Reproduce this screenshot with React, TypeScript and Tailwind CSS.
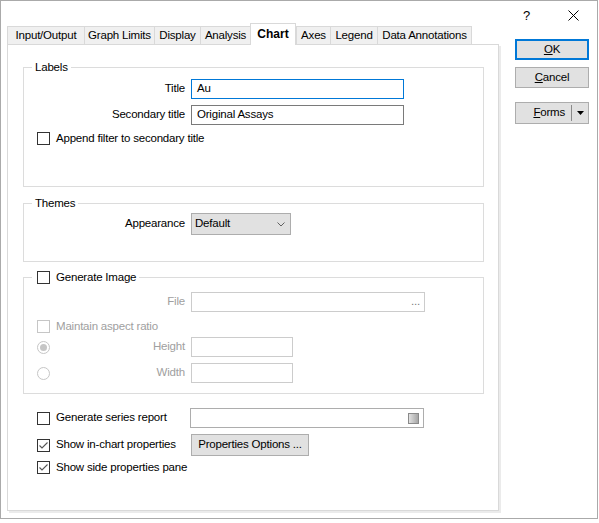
import React from 'react';

type BoxProps = { checked?: boolean; disabled?: boolean };

function CheckBox({ checked = false, disabled = false }: BoxProps) {
    return (
        <span
            className={`relative inline-block w-[13px] h-[13px] shrink-0 border bg-white ${disabled ? 'border-[#c6c6c6]' : 'border-[#333333]'}`}
        >
            {checked && (
                <svg width="11" height="11" viewBox="0 0 11 11" className="absolute left-0 top-0">
                    <polyline points="1.5,5.5 4,8 9.5,2.5" fill="none" stroke="#555555" strokeWidth="1.1" />
                </svg>
            )}
        </span>
    );
}

function Radio({ selected = false }: { selected?: boolean }) {
    return (
        <span className="flex items-center justify-center w-[13px] h-[13px] shrink-0 rounded-full border border-[#c6c6c6] bg-white">
            {selected && <span className="w-[7px] h-[7px] rounded-full bg-[#c6c6c6]" />}
        </span>
    );
}

const tabs = [
    { label: 'Input/Output', w: 'w-[77px]' },
    { label: 'Graph Limits', w: 'w-[70px]' },
    { label: 'Display', w: 'w-[46px]' },
    { label: 'Analysis', w: 'w-[50px]' },
    { label: 'Chart', w: 'w-[46px]', active: true },
    { label: 'Axes', w: 'w-[34px]' },
    { label: 'Legend', w: 'w-[47px]' },
    { label: 'Data Annotations', w: 'w-[95px]', last: true },
];

function Group({ title, height, children }: { title: React.ReactNode; height: string; children: React.ReactNode }) {
    return (
        <div className={`relative border border-[#dcdcdc] ${height}`}>
            <div className="absolute left-[8px] -top-[8px] bg-white px-[3px] h-[15px] flex items-center leading-none">
                {title}
            </div>
            {children}
        </div>
    );
}

export default function App() {
    return (
        <div className="w-[599px] h-[523px] bg-white text-[11.5px] tracking-[-0.2px] whitespace-nowrap text-black font-['Segoe_UI','Liberation_Sans',Arial,sans-serif]">
            <div className="w-[598px] h-[519px] border border-[#aaaaaa] flex flex-col">
                {/* title bar */}
                <div className="h-[22px] flex items-center justify-end pt-[6px] pr-[18px] gap-[38px]">
                    <span className="text-[13px] leading-none">?</span>
                    <svg width="11" height="11" viewBox="0 0 11 11">
                        <path d="M0.5 0.5 L10.5 10.5 M10.5 0.5 L0.5 10.5" stroke="#000" strokeWidth="1" />
                    </svg>
                </div>

                <div className="flex">
                    {/* tab control */}
                    <div className="ml-[6px] w-[492px] flex flex-col">
                        <div className="h-[21px] flex items-end">
                            {tabs.map((t) =>
                                t.active ? (
                                    <div
                                        key={t.label}
                                        className={`${t.w} h-[22px] -mb-px relative z-10 bg-white border-l border-t border-r border-[#d9d9d9] flex items-center justify-center font-bold text-[12px] tracking-[0px] pb-[2px]`}
                                    >
                                        {t.label}
                                    </div>
                                ) : (
                                    <div
                                        key={t.label}
                                        className={`${t.w} h-[18px] bg-[#f0f0f0] border-l border-t border-[#d9d9d9] ${t.last ? 'border-r' : ''} flex items-center justify-center`}
                                    >
                                        {t.label}
                                    </div>
                                )
                            )}
                        </div>
                        <div className="h-[467px] border border-[#d9d9d9] bg-white shadow-[2px_2px_0_0_#ebebeb] pl-[15px] pr-[14px] pt-[22px]">
                            <Group title="Labels" height="h-[120px]">
                                <div className="pt-[11px]">
                                    <div className="flex items-center h-[20px]">
                                        <span className="w-[161px] text-right">Title</span>
                                        <div className="ml-[6px] w-[213px] h-[20px] border border-[#0078d7] pl-[5px] flex items-center">Au</div>
                                    </div>
                                    <div className="flex items-center h-[20px] mt-[6px]">
                                        <span className="w-[161px] text-right">Secondary title</span>
                                        <div className="ml-[6px] w-[213px] h-[20px] border border-[#7a7a7a] pl-[5px] flex items-center">Original Assays</div>
                                    </div>
                                    <div className="flex items-center h-[13px] mt-[7px] pl-[13px] gap-[6px]">
                                        <CheckBox />
                                        <span>Append filter to secondary title</span>
                                    </div>
                                </div>
                            </Group>

                            <div className="mt-[16px]">
                                <Group title="Themes" height="h-[59px]">
                                    <div className="pt-[9px] flex items-center">
                                        <span className="w-[161px] text-right">Appearance</span>
                                        <div className="ml-[6px] w-[100px] h-[22px] bg-[#e1e1e1] border border-[#adadad] flex items-center justify-between pl-[3px] pr-[5px]">
                                            <span>Default</span>
                                            <svg width="8" height="5" viewBox="0 0 8 5">
                                                <polyline points="0.5,0.5 4,4 7.5,0.5" fill="none" stroke="#606060" strokeWidth="1" />
                                            </svg>
                                        </div>
                                    </div>
                                </Group>
                            </div>

                            <div className="mt-[15px]">
                                <Group
                                    title={
                                        <span className="flex items-center gap-[6px] pl-[2px]">
                                            <CheckBox />
                                            <span>Generate Image</span>
                                        </span>
                                    }
                                    height="h-[117px]"
                                >
                                    <div className="pt-[14px] text-[#a0a0a0]">
                                        <div className="flex items-center h-[20px]">
                                            <span className="w-[161px] text-right">File</span>
                                            <div className="ml-[6px] w-[234px] h-[20px] border border-[#cccccc] flex items-center justify-end pr-[4px] text-[#7a7a7a] leading-none">
                                                ...
                                            </div>
                                        </div>
                                        <div className="flex items-center h-[13px] mt-[8px] pl-[13px] gap-[6px]">
                                            <CheckBox disabled />
                                            <span>Maintain aspect ratio</span>
                                        </div>
                                        <div className="flex items-center h-[20px] mt-[4px]">
                                            <div className="w-[161px] flex items-center pl-[13px]">
                                                <Radio selected />
                                                <span className="flex-1 text-right">Height</span>
                                            </div>
                                            <div className="ml-[6px] w-[102px] h-[20px] border border-[#cccccc]" />
                                        </div>
                                        <div className="flex items-center h-[20px] mt-[6px]">
                                            <div className="w-[161px] flex items-center pl-[13px]">
                                                <Radio />
                                                <span className="flex-1 text-right">Width</span>
                                            </div>
                                            <div className="ml-[6px] w-[102px] h-[20px] border border-[#cccccc]" />
                                        </div>
                                    </div>
                                </Group>
                            </div>

                            <div className="mt-[14px] flex items-center h-[20px]">
                                <div className="w-[161px] flex items-center pl-[14px] gap-[6px]">
                                    <CheckBox />
                                    <span>Generate series report</span>
                                </div>
                                <div className="ml-[6px] w-[234px] h-[20px] border border-[#adadad] flex items-center justify-end pr-[4px]">
                                    <span className="w-[11px] h-[11px] border border-[#8a8a8a] bg-linear-to-r from-[#e2e2e2] to-[#a6a6a6]" />
                                </div>
                            </div>
                            <div className="mt-[6px] flex items-center h-[22px]">
                                <div className="w-[161px] flex items-center pl-[14px] gap-[6px]">
                                    <CheckBox checked />
                                    <span>Show in-chart properties</span>
                                </div>
                                <div className="ml-[7px] w-[118px] h-[22px] bg-[#e1e1e1] border border-[#adadad] flex items-center justify-center">
                                    Properties Options ...
                                </div>
                            </div>
                            <div className="mt-[5px] flex items-center h-[13px] pl-[14px] gap-[6px]">
                                <CheckBox checked />
                                <span>Show side properties pane</span>
                            </div>
                        </div>
                    </div>

                    {/* dialog buttons */}
                    <div className="ml-[16px] mt-[16px] flex flex-col w-[74px]">
                        <div className="h-[21px] bg-[#e1e1e1] border-2 border-[#0078d7] flex items-center justify-center">
                            <span><span className="underline">O</span>K</span>
                        </div>
                        <div className="mt-[7px] h-[21px] bg-[#e1e1e1] border border-[#adadad] flex items-center justify-center">
                            <span><span className="underline">C</span>ancel</span>
                        </div>
                        <div className="mt-[14px] h-[22px] bg-[#e1e1e1] border border-[#adadad] flex items-center">
                            <div className="flex-1 flex items-center justify-end pr-[6px]">
                                <span><span className="underline">F</span>orms</span>
                            </div>
                            <div className="w-px h-[16px] bg-[#8a8a8a]" />
                            <div className="w-[16px] flex items-center justify-center">
                                <svg width="7" height="4" viewBox="0 0 7 4">
                                    <polygon points="0,0 7,0 3.5,4" fill="#000" />
                                </svg>
                            </div>
                        </div>
                    </div>
                </div>
            </div>
        </div>
    );
}
